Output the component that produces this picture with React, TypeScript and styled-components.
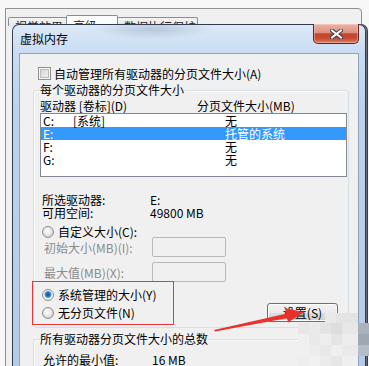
import React from "react";
import styled, { createGlobalStyle } from "styled-components";

const GlobalStyle = createGlobalStyle`
  html, body {
    margin: 0;
    padding: 0;
  }
  body {
    background: #f6f6f6;
    font-family: "Noto Sans CJK SC", "Liberation Sans", sans-serif;
  }
`;

// 전체 화면
const Screen = styled.div`
  position: relative;
  width: 369px;
  height: 366px;
  overflow: hidden;
  box-sizing: border-box;
  padding-top: 8px;
  background: #f7f7f7;
  font-size: 12px;
  color: #000;
`;

// 뒤쪽 "性能选项" 창
const ParentWindow = styled.div`
  margin-left: 5px;
  width: 357px;
  height: 420px;
  box-sizing: border-box;
  border: 1px solid #8c8f96;
  border-radius: 0 4px 0 0;
  background: #f0f0f0;
  padding: 6px 0 0 2px;
  display: flex;
  align-items: flex-start;
`;

const Tab = styled.div<{ $active?: boolean; $w: number }>`
  width: ${(p) => p.$w}px;
  height: ${(p) => (p.$active ? 11 : 9)}px;
  overflow: hidden;
  box-sizing: border-box;
  margin-top: ${(p) => (p.$active ? 0 : 2)}px;
  margin-left: -1px;
  border: 1px solid #898c95;
  border-bottom: none;
  border-radius: 2px 2px 0 0;
  background: ${(p) =>
    p.$active ? "#fcfcfc" : "linear-gradient(180deg, #f4f4f4, #e6e6e6)"};
  padding: ${(p) => (p.$active ? 3 : 2)}px 0 0 6px;
  line-height: 14px;
  white-space: nowrap;
  color: #222;
  &:first-child {
    margin-left: 0;
  }
`;

// 가상 메모리 대화상자
const Dialog = styled.div`
  position: absolute;
  left: 12px;
  top: 24px;
  width: 354px;
  height: 380px;
  box-sizing: border-box;
  border: 1px solid rgba(25, 35, 50, 0.85);
  border-radius: 7px 7px 0 0;
  background: radial-gradient(ellipse 60px 10px at 140px 4px, rgba(120, 140, 165, 0.35), transparent),
    linear-gradient(180deg, #dce9f7 0px, #c8dcf2 28px, #bcd3ee 80px, #b3cbe8 100%);
  padding: 0 6px;
  display: flex;
  flex-direction: column;
  box-shadow: 1px 0 0 #6b6f75, 2px 0 0 #3d3f42;
`;

const TitleBar = styled.div`
  height: 28px;
  line-height: 28px;
  padding-left: 1px;
  font-size: 12px;
  color: #000;
`;

const CloseButton = styled.div`
  position: absolute;
  top: -1px;
  right: 6px;
  width: 46px;
  height: 20px;
  box-sizing: border-box;
  border: 1px solid #5e2218;
  border-top: none;
  border-radius: 0 0 5px 5px;
  background: linear-gradient(180deg, #ebb3a8 0%, #de8f80 45%, #c5432b 52%, #c84a32 75%, #dd7e67 100%);
  box-shadow: inset 0 0 0 1px rgba(255, 220, 210, 0.45);
  display: flex;
  align-items: center;
  justify-content: center;
`;

const Client = styled.div`
  flex: 1;
  border: 1px solid #8fa2ba;
  background: #f0f0f0;
  padding: 13px 8px 0 13px;
`;

const CheckRow = styled.label`
  display: flex;
  align-items: center;
  gap: 3px;
  height: 13px;
  line-height: 13px;
  margin-left: 5px;
  white-space: nowrap;
`;

const CheckBox = styled.span`
  width: 13px;
  height: 13px;
  box-sizing: border-box;
  border: 1px solid #8e8f8f;
  background: linear-gradient(135deg, #d2d2d2, #f4f4f4);
  box-shadow: inset 0 0 0 1px #f7f7f7, inset 0 0 0 2px #b9bcc0;
  flex: none;
`;

const GroupBox = styled.fieldset<{ $top: number; $pt: number; $pb: number }>`
  margin: ${(p) => p.$top}px 0 0;
  width: 316px;
  box-sizing: border-box;
  min-inline-size: 0;
  padding: ${(p) => p.$pt}px 0 ${(p) => p.$pb}px 6px;
  border: 1px solid #d5dfe5;
  border-radius: 3px;
  box-shadow: inset 1px 1px 0 #fbfbfb;
`;

const Legend = styled.legend`
  padding: 0;
  line-height: 14px;
  white-space: nowrap;
`;

const HeaderRow = styled.div`
  display: grid;
  grid-template-columns: 157px 1fr;
  line-height: 14px;
  white-space: nowrap;
`;

const ListBox = styled.div`
  width: 307px;
  height: 64px;
  box-sizing: border-box;
  border: 1px solid #828790;
  background: #fff;
`;

const ListRow = styled.div<{ $selected?: boolean }>`
  display: grid;
  grid-template-columns: 30px 152px 1fr;
  height: 13px;
  line-height: 13px;
  padding-left: 2px;
  white-space: nowrap;
  background: ${(p) => (p.$selected ? "#3399ff" : "transparent")};
  color: ${(p) => (p.$selected ? "#fff" : "#000")};
`;

const InfoGrid = styled.div`
  display: grid;
  grid-template-columns: 108px 1fr;
  grid-auto-rows: 13px;
  line-height: 13px;
  margin-top: 16px;
  padding-left: 2px;
  white-space: nowrap;
`;

const RadioRow = styled.label<{ $top: number; $h: number }>`
  display: flex;
  align-items: center;
  gap: 4px;
  height: ${(p) => p.$h}px;
  line-height: 13px;
  margin-top: ${(p) => p.$top}px;
  padding-left: 2px;
  white-space: nowrap;
`;

const Radio = styled.span<{ $checked?: boolean }>`
  width: 12px;
  height: 12px;
  box-sizing: border-box;
  border-radius: 50%;
  border: 1px solid #8e8f8f;
  flex: none;
  background: ${(p) =>
    p.$checked
      ? "radial-gradient(circle at 50% 45%, #0b4f93 0, #1f72bd 1.8px, #5aa7e2 3.2px, #e9e9e9 3.8px, #f6f6f6 4.5px, #d0d0d0 100%)"
      : "radial-gradient(circle at 45% 40%, #ffffff 0, #f0f0f0 2.5px, #d3d3d3 6px)"};
`;

const SizeGrid = styled.div`
  display: grid;
  grid-template-columns: 108px 74px;
  grid-auto-rows: 20px;
  row-gap: 5px;
  align-items: center;
  padding-left: 4px;
  white-space: nowrap;
  color: #8b8b8b;
`;

const SizeInput = styled.div`
  height: 20px;
  box-sizing: border-box;
  border: 1px solid #b9b9b9;
  border-radius: 2px;
  background: #f0f0f0;
`;

const PushButton = styled.div`
  margin-left: auto;
  margin-right: 10px;
  width: 71px;
  height: 19px;
  box-sizing: border-box;
  border: 1px solid #707070;
  border-radius: 3px;
  background: linear-gradient(180deg, #f2f2f2 0%, #ebebeb 50%, #dddddd 51%, #cfcfcf 100%);
  box-shadow: inset 0 0 0 1px #fbfbfb;
  text-align: center;
  line-height: 17px;
`;

const TotalGrid = styled.div`
  display: grid;
  grid-template-columns: 109px 1fr;
  line-height: 13px;
  padding-left: 3px;
  white-space: nowrap;
`;

// 빨간 표시 (스크린샷 위의 주석)
const Marker = styled.div`
  position: absolute;
  left: 32px;
  top: 281px;
  width: 142px;
  height: 44px;
  box-sizing: border-box;
  border: 1.5px solid #e8383b;
  pointer-events: none;
`;

const Overlay = styled.svg`
  position: absolute;
  left: 0;
  top: 0;
  pointer-events: none;
`;

const drives = [
  { letter: "C:", label: "[系统]", size: "无" },
  { letter: "E:", label: "", size: "托管的系统", selected: true },
  { letter: "F:", label: "", size: "无" },
  { letter: "G:", label: "", size: "无" },
];

// 모자이크 워터마크 조각
const mosaic = [
  [325, 313, 11, 10, "#e9e9e9"], [336, 313, 22, 10, "#e4e4e4"],
  [298, 323, 11, 11, "#ebe6e6"], [309, 323, 11, 11, "#eaeaea"], [320, 323, 11, 11, "#e3e3e3"],
  [331, 323, 11, 11, "#dddddd"], [342, 323, 16, 11, "#e7e7e7"], [358, 323, 11, 11, "#a9b2bd"],
  [298, 334, 11, 11, "#efefef"], [309, 334, 11, 11, "#e9e9e9"], [320, 334, 11, 11, "#eeeeee"],
  [331, 334, 11, 11, "#e5e5e5"], [342, 334, 16, 11, "#ededed"], [358, 334, 11, 11, "#9ea8b5"],
  [298, 345, 11, 11, "#f0f0f0"], [309, 345, 11, 11, "#ececec"], [320, 345, 11, 11, "#e8e8e8"],
  [331, 345, 11, 11, "#efefef"], [342, 345, 16, 11, "#eaeaea"], [358, 345, 11, 11, "#b5bec8"],
  [298, 356, 11, 10, "#eeeeee"], [309, 356, 11, 10, "#f1f1f1"], [320, 356, 11, 10, "#ebebeb"],
  [331, 356, 11, 10, "#e6e6e6"], [342, 356, 16, 10, "#efefef"],
] as const;

export default function App() {
  return (
    <>
      <GlobalStyle />
      <Screen>
        <ParentWindow>
          <Tab $w={59}>视觉效果</Tab>
          <Tab $w={52} $active>
            高级
          </Tab>
          <Tab $w={81}>数据执行保护</Tab>
        </ParentWindow>

        <Dialog>
          <TitleBar>虚拟内存</TitleBar>
          <CloseButton>
            <svg width="13" height="10" viewBox="0 0 13 10">
              <path d="M2 1.5 L11 8.5 M11 1.5 L2 8.5" stroke="#3a3d42" strokeWidth="4" strokeLinecap="square" />
              <path d="M2 1.5 L11 8.5 M11 1.5 L2 8.5" stroke="#fff" strokeWidth="2" strokeLinecap="square" />
            </svg>
          </CloseButton>

          <Client>
            <CheckRow>
              <CheckBox />
              自动管理所有驱动器的分页文件大小(A)
            </CheckRow>

            <GroupBox $top={3} $pt={2} $pb={5}>
              <Legend>每个驱动器的分页文件大小</Legend>
              <HeaderRow>
                <span>驱动器 [卷标](D)</span>
                <span>分页文件大小(MB)</span>
              </HeaderRow>
              <ListBox>
                {drives.map((d) => (
                  <ListRow key={d.letter} $selected={d.selected}>
                    <span>{d.letter}</span>
                    <span>{d.label}</span>
                    <span>{d.size}</span>
                  </ListRow>
                ))}
              </ListBox>

              <InfoGrid>
                <span>所选驱动器:</span>
                <span>E:</span>
                <span>可用空间:</span>
                <span>49800 MB</span>
              </InfoGrid>

              <RadioRow $top={7} $h={11}>
                <Radio />
                自定义大小(C):
              </RadioRow>
              <SizeGrid>
                <span>初始大小(MB)(I):</span>
                <SizeInput />
                <span>最大值(MB)(X):</span>
                <SizeInput />
              </SizeGrid>

              <RadioRow $top={6} $h={13}>
                <Radio $checked />
                系统管理的大小(Y)
              </RadioRow>
              <RadioRow $top={2} $h={19}>
                <Radio />
                无分页文件(N)
                <PushButton>设置(S)</PushButton>
              </RadioRow>
            </GroupBox>

            <GroupBox $top={4} $pt={7} $pb={6}>
              <Legend>所有驱动器分页文件大小的总数</Legend>
              <TotalGrid>
                <span>允许的最小值:</span>
                <span>16 MB</span>
              </TotalGrid>
            </GroupBox>
          </Client>
        </Dialog>

        <Marker />
        <Overlay width="369" height="366" viewBox="0 0 369 366">
          <polygon points="214,330 287,313.6 288,318 215,331.5" fill="#e8322b" />
          <polygon points="304,312 285,308.3 288,322.6" fill="#e8322b" />
          {mosaic.map(([x, y, w, h, c], i) => (
            <rect key={i} x={x} y={y} width={w} height={h} fill={c} />
          ))}
        </Overlay>
      </Screen>
    </>
  );
}
